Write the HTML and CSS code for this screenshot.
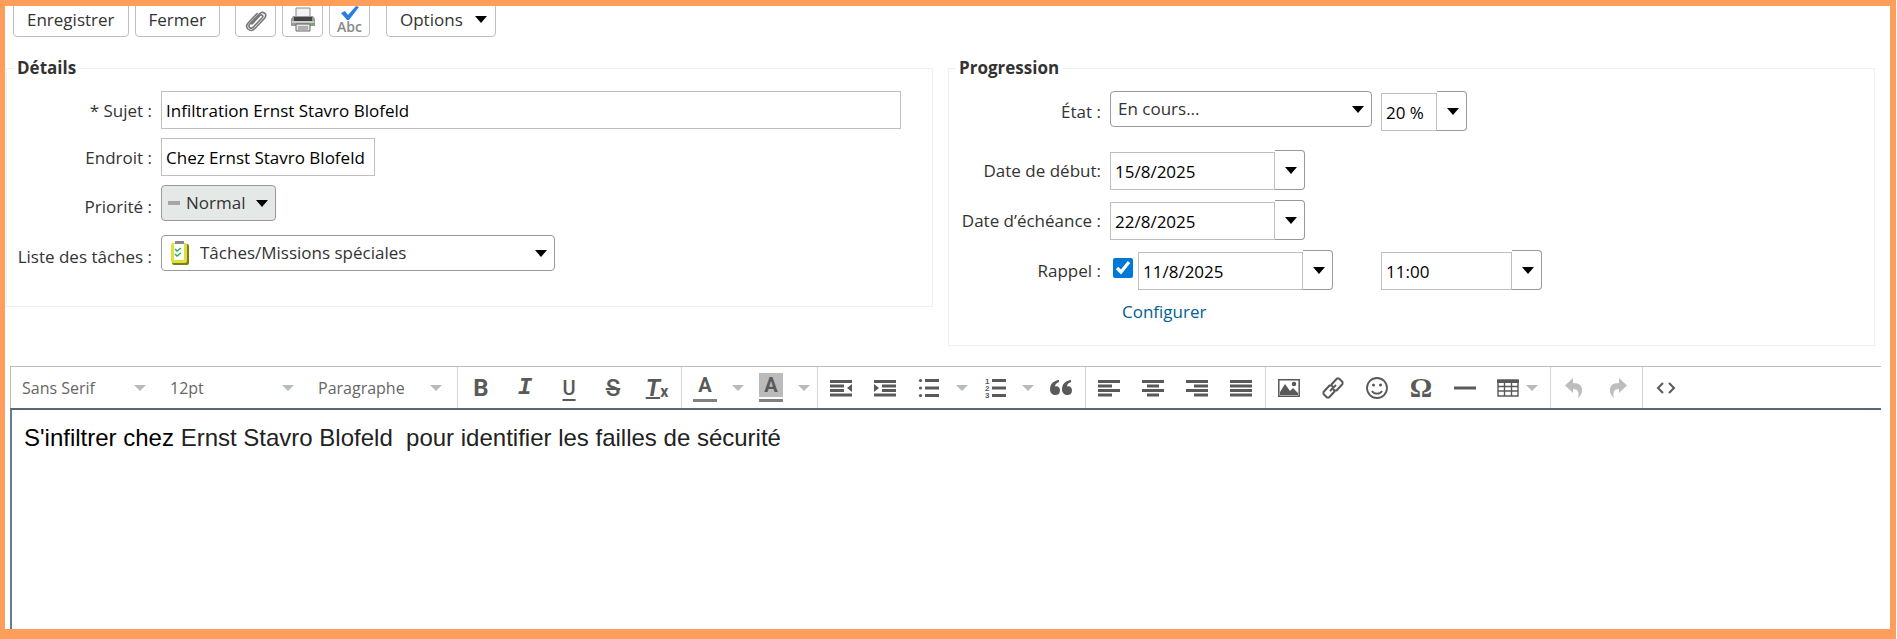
FILE: index.html
```html
<!DOCTYPE html>
<html lang="fr">
<head>
<meta charset="UTF-8">
<title>Infiltration Ernst Stavro Blofeld</title>
<link rel="stylesheet" href="styles.css">
</head>
<body>

    <!-- Main toolbar -->
    <div class="toolbar">
        <button class="button">Enregistrer</button>
        <button class="button">Fermer</button>
        <div class="button-group">
            <button class="button button-icon" aria-label="Joindre">
                <svg width="24" height="24" viewBox="0 0 24 24" fill="none" stroke="#777" stroke-width="1.6" stroke-linecap="round"><path d="M8 16l8-8.500c1.500-1.600 3.800 .3 2.400 2l-9.200 9.700c-2.500 2.400-5.700-.4-3.400-3.100l9.700-10.300c3.600-3.500 8.300 .4 5.100 4.400l-9.900 10.500c-4.600 4.300-10.700-.9-6.600-5.700l9-9.500"/></svg>
            </button>
            <button class="button button-icon" aria-label="Imprimer">
                <svg width="26" height="26" viewBox="0 0 26 26"><path d="M6 1h14v9H6z" fill="#f2f2f2" stroke="#888"/><path d="M3 9h20l2 3v7H1v-7z" fill="#999"/><path d="M4 10h18v4H4z" fill="#444"/><path d="M2 14h22v2H2z" fill="#ccc"/><path d="M6 17h14v7H6z" fill="#e6e6e6" stroke="#666"/><path d="M8 20h10M8 22h10" stroke="#777"/><path d="M23 16v2" stroke="#3c3" stroke-width="2"/></svg>
            </button>
            <button class="button button-icon spell" aria-label="Orthographe">
                <svg width="20" height="14" viewBox="0 0 20 14"><path d="M1 7l4-2 3 4 8-9 3 1-10 13H7z" fill="#2a7de1"/></svg>
                <span>Abc</span>
            </button>
        </div>
        <button class="button button-menu">Options <i class="arrow"></i></button>
    </div>

    <!-- Task form -->
    <form class="panels">
        <fieldset class="panel details">
            <legend>Détails</legend>
            <div class="row">
                <label for="subject">* Sujet :</label>
                <input class="text grow" id="subject" type="text" value="Infiltration Ernst Stavro Blofeld">
            </div>
            <div class="row">
                <label for="location">Endroit :</label>
                <input class="text location" id="location" type="text" value="Chez Ernst Stavro Blofeld">
            </div>
            <div class="row row-select">
                <label for="priority">Priorité :</label>
                <div class="select priority">
                    <select id="priority"><option>Normal</option></select>
                    <i class="arrow"></i>
                </div>
            </div>
            <div class="row row-select">
                <label for="folder">Liste des tâches :</label>
                <div class="select folder">
                    <svg width="20" height="24" viewBox="0 0 20 24"><rect x="2" y="3" width="17" height="21" rx="2" fill="#7d7d1c"/><rect x="1" y="2" width="16" height="20" rx="2" fill="#dfe03a"/><path d="M4 3h10v16H4z" fill="#fff"/><path d="M5 0h9v3H5z" fill="#888"/><path d="M5 8l2 2 4-3M5 13l2 2 4-3" fill="none" stroke="#2fae4b" stroke-width="1.500"/></svg>
                    <select id="folder"><option>Tâches/Missions spéciales</option></select>
                    <i class="arrow"></i>
                </div>
            </div>
        </fieldset>

        <fieldset class="panel progress">
            <legend>Progression</legend>
            <div class="row row-status">
                <label for="status">État :</label>
                <div class="cell">
                    <div class="select status">
                        <select id="status"><option>En cours...</option></select>
                        <i class="arrow"></i>
                    </div>
                </div>
                <div class="combo percent">
                    <input class="text" type="text" value="20 %" aria-label="Pourcentage">
                    <button type="button" aria-label="Choisir le pourcentage"><i class="arrow"></i></button>
                </div>
            </div>
            <div class="row">
                <label for="start">Date de début:</label>
                <div class="combo date">
                    <input class="text" id="start" type="text" value="15/8/2025">
                    <button type="button" aria-label="Choisir la date de début"><i class="arrow"></i></button>
                </div>
            </div>
            <div class="row">
                <label for="due">Date d’échéance :</label>
                <div class="combo date">
                    <input class="text" id="due" type="text" value="22/8/2025">
                    <button type="button" aria-label="Choisir la date d'échéance"><i class="arrow"></i></button>
                </div>
            </div>
            <div class="row">
                <label for="reminder">Rappel :</label>
                <div class="cell">
                    <input class="check" id="reminder" type="checkbox" checked>
                    <div class="combo date">
                        <input class="text" type="text" value="11/8/2025" aria-label="Date du rappel">
                        <button type="button" aria-label="Choisir la date du rappel"><i class="arrow"></i></button>
                    </div>
                </div>
                <div class="combo time">
                    <input class="text" type="text" value="11:00" aria-label="Heure du rappel">
                    <button type="button" aria-label="Choisir l'heure du rappel"><i class="arrow"></i></button>
                </div>
            </div>
            <a class="configure" href="#">Configurer</a>
        </fieldset>
    </form>

    <!-- Editor -->
    <div class="editor">
        <div class="editor-bar">
            <div class="group">
                <button class="listbox">Sans Serif <i class="caret"></i></button>
                <button class="listbox">12pt <i class="caret"></i></button>
                <button class="listbox">Paragraphe <i class="caret"></i></button>
            </div>
            <div class="group">
                <button class="tool bold">B</button>
                <button class="tool italic">I</button>
                <button class="tool underline">U</button>
                <button class="tool strike">S</button>
                <button class="tool clear"><span>T</span><sub>x</sub></button>
            </div>
            <div class="group">
                <div class="split"><button class="tool color"><span>A</span></button><button class="open" aria-label="Couleur du texte"><i class="caret"></i></button></div>
                <div class="split"><button class="tool color back"><span>A</span></button><button class="open" aria-label="Couleur de fond"><i class="caret"></i></button></div>
            </div>
            <div class="group">
                <button class="tool" aria-label="Diminuer le retrait"><svg viewBox="0 0 22 22"><path d="M0 3h22v3H0zM0 7.500h14v3H0zM0 12h14v3H0zM0 16.500h22v3H0zM22 7v8l-5-4z"/></svg></button>
                <button class="tool" aria-label="Augmenter le retrait"><svg viewBox="0 0 22 22"><path d="M0 3h22v3H0zM8 7.500h14v3H8zM8 12h14v3H8zM0 16.500h22v3H0zM0 7v8l5-4z"/></svg></button>
                <div class="split"><button class="tool" aria-label="Liste à puces"><svg viewBox="0 0 22 22"><path d="M7 2h14v3H7zM7 9.500h14v3H7zM7 17h14v3H7z"/><circle cx="2.500" cy="3.500" r="1.600"/><circle cx="2.500" cy="11" r="1.600"/><circle cx="2.500" cy="18.500" r="1.600"/></svg></button><button class="open" aria-label="Types de puces"><i class="caret"></i></button></div>
                <div class="split"><button class="tool" aria-label="Liste numérotée"><svg viewBox="0 0 22 22"><path d="M8 2h14v3H8zM8 9.500h14v3H8zM8 17h14v3H8z"/><text x="1" y="7">1</text><text x="1" y="14">2</text><text x="1" y="21">3</text></svg></button><button class="open" aria-label="Types de numéros"><i class="caret"></i></button></div>
                <button class="tool" aria-label="Citation"><svg viewBox="0 0 22 22"><path id="quote" d="M9 3v2C6 6 5 8 5 9.500c3-1 5 1 5 4 0 3-2 4.500-4.500 4.500C2.500 18 0 16 0 12c0-5 4-8.500 9-9z"/><use href="#quote" x="12"/></svg></button>
            </div>
            <div class="group">
                <button class="tool" aria-label="Aligner à gauche"><svg viewBox="0 0 22 22"><path d="M0 3h22v3H0zM0 7.500h14v3H0zM0 12h22v3H0zM0 16.500h14v3H0z"/></svg></button>
                <button class="tool" aria-label="Centrer"><svg viewBox="0 0 22 22"><path d="M0 3h22v3H0zM5 7.500h12v3H5zM0 12h22v3H0zM5 16.500h12v3H5z"/></svg></button>
                <button class="tool" aria-label="Aligner à droite"><svg viewBox="0 0 22 22"><path d="M0 3h22v3H0zM8 7.500h14v3H8zM0 12h22v3H0zM8 16.500h14v3H8z"/></svg></button>
                <button class="tool" aria-label="Justifier"><svg viewBox="0 0 22 22"><path d="M0 3h22v3H0zM0 7.500h22v3H0zM0 12h22v3H0zM0 16.500h22v3H0z"/></svg></button>
            </div>
            <div class="group">
                <button class="tool" aria-label="Image"><svg viewBox="0 0 22 22"><path d="M.8 2.800h20.400v16.400H.8z" fill="none" stroke="#595959" stroke-width="1.500"/><path d="M2 18V15l5-8 5 7 3-3 5 5v2z"/><circle cx="16" cy="7" r="2.200"/></svg></button>
                <button class="tool" aria-label="Lien"><svg viewBox="0 0 22 22"><g fill="none" stroke="#595959" stroke-width="2" stroke-linejoin="round"><path d="M9 8l6-6.500h2L20.500 5v2l-6 6.500h-2L11 12"/><path d="M13 14l-6 6.500H5L1.500 17v-2l6-6.500h2L11 10"/><path d="M8 14l6-6"/></g></svg></button>
                <button class="tool" aria-label="Émoticône"><svg viewBox="0 0 22 22"><g fill="none" stroke="#595959" stroke-width="1.800"><circle cx="11" cy="11" r="10"/><path d="M6 14c2 3.500 8 3.500 10 0"/></g><circle cx="7.500" cy="8" r="1.500"/><circle cx="14.500" cy="8" r="1.500"/></svg></button>
                <button class="tool omega">Ω</button>
                <button class="tool" aria-label="Ligne horizontale"><svg viewBox="0 0 22 22"><path d="M0 9.500h22v3H0z"/></svg></button>
                <button class="tool table" aria-label="Tableau"><svg viewBox="0 0 22 22"><path d="M1 3h20v16H1zM1 9.500h20M1 14h20M7.500 4v15M14.500 4v15" fill="none" stroke="#595959" stroke-width="1.400"/><path d="M0 3h22v3H0z"/></svg><i class="caret"></i></button>
            </div>
            <div class="group">
                <button class="tool disabled" aria-label="Annuler" disabled><svg viewBox="0 0 22 22"><path d="M2 8.500L10 1v5c7 0 9.500 3 9 8 0 3-2 5-4 7 1-5 1-9-5-9v4z"/></svg></button>
                <button class="tool disabled" aria-label="Rétablir" disabled><svg viewBox="0 0 22 22"><path d="M20 8.500L12 1v5c-7 0-9.500 3-9 8 0 3 2 5 4 7-1-5-1-9 5-9v4z"/></svg></button>
            </div>
            <div class="group">
                <button class="tool" aria-label="Code source"><svg viewBox="0 0 22 22"><path d="M8 6l-5 5 5 5M14 6l5 5-5 5" fill="none" stroke="#595959" stroke-width="2"/></svg></button>
            </div>
        </div>
        <div class="editor-body" contenteditable="true" role="textbox" aria-label="Contenu" spellcheck="false">S'infiltrer chez <span>Ernst Stavro Blofeld &nbsp;pour identifier les failles de sécurité</span></div>
    </div>

</body>
</html>
```
FILE: styles.css
```css
* {
    box-sizing: border-box;
}

body {
    display: flex;
    flex-direction: column;
    min-height: 100vh;
    margin: 0;
    background-color: #fff;
    color: #333;
    font-family: 'Open Sans', 'Noto Sans', sans-serif;
    font-size: 17px;
    line-height: 24px;
}

/* Orange frame over the page edges */
body::after {
    content: "";
    position: fixed;
    inset: 0 1px 0 0;
    border: solid #ff9d5a;
    border-width: 6px 6px 10px 5px;
    pointer-events: none;
}

button, input, select {
    font: inherit;
    color: inherit;
    margin: 0;
}

button {
    padding: 0;
    background: none;
    border: none;
    cursor: pointer;
}

.arrow {
    border: 6px solid transparent;
    border-top: 7px solid #000;
    border-bottom: 0;
}

.caret {
    border: 6px solid transparent;
    border-top-color: #b4bcc2;
    border-bottom: 0;
}

/* Main toolbar */
.toolbar {
    display: flex;
    gap: 6px;
    padding: 2px 13px 0;
}

.button {
    display: flex;
    align-items: center;
    justify-content: center;
    height: 35px;
    padding: 0 13px;
    background-color: #fff;
    border: 1px solid #bfbfbf;
    border-radius: 4px;
}

.button-group {
    display: flex;
    gap: 6px;
    margin: 0 10px 0 9px;
}

.button-icon {
    width: 41px;
    padding: 0;
}

.button-menu {
    gap: 12px;
    padding-right: 8px;
}

.spell {
    flex-direction: column;
    color: #888;
    font-size: 14px;
    font-weight: 600;
    line-height: 13px;
}

/* Form panels */
.panels {
    display: grid;
    grid-template-columns: 1fr 1fr;
    align-items: start;
    gap: 15px;
    margin: 19px 22px 0 6px;
}

.panel {
    min-width: 0;
    margin: 0;
    border: 1px solid #f0f0f0;
}

.details {
    padding: 11px 31px 30px 0;
}

.progress {
    padding: 11px 0 21px;
}

legend {
    margin-left: 7px;
    padding: 0 3px;
    font-weight: 700;
    font-size: 17px;
}

.row {
    display: flex;
    align-items: flex-start;
    margin-bottom: 9px;
}

.row:last-child {
    margin-bottom: 0;
}

.row-select {
    min-height: 41px;
}

.row label {
    flex: none;
    width: 154px;
    padding: 8px 9px 0 0;
    text-align: right;
    white-space: nowrap;
}

.row-select label {
    padding-top: 10px;
}

.progress .row {
    margin-bottom: 10px;
}

.progress .row-status {
    margin-bottom: 19px;
}

.progress .row label {
    width: 161px;
    padding-top: 9px;
}

.text {
    height: 38px;
    padding: 0 4px;
    background-color: #fff;
    border: 1px solid #bfbfbf;
    color: #000;
}

.grow {
    flex: 1;
    min-width: 0;
}

.location {
    width: 214px;
}

.select {
    position: relative;
    height: 36px;
}

.select select {
    width: 100%;
    height: 100%;
    padding: 0 32px 0 7px;
    background-color: #fff;
    border: 1px solid #999;
    border-radius: 4px;
    appearance: none;
}

.select .arrow {
    position: absolute;
    top: 15px;
    right: 8px;
    pointer-events: none;
}

.select svg {
    position: absolute;
    top: 6px;
    left: 9px;
}

.priority {
    width: 115px;
}

.priority select {
    padding: 0 0 0 24px;
    background-color: #e4e9e7;
}

.priority::before {
    content: "";
    position: absolute;
    top: 16px;
    left: 7px;
    width: 12px;
    height: 4px;
    background-color: #a6a6a6;
}

.folder {
    width: 394px;
}

.folder select {
    padding-left: 38px;
}

.status {
    width: 262px;
}

.cell {
    display: flex;
    width: 271px;
}

.combo {
    display: flex;
}

.combo .text {
    margin-top: 2px;
}

.combo button {
    display: flex;
    align-items: center;
    justify-content: center;
    width: 30px;
    height: 40px;
    padding-left: 2px;
    border: 1px solid #999;
    border-left: none;
    border-radius: 0 4px 4px 0;
}

.date .text {
    width: 165px;
}

.percent .text {
    width: 56px;
}

.time .text {
    width: 131px;
}

.check {
    width: 20px;
    height: 20px;
    margin: 8px 5px 0 3px;
    accent-color: #0078d7;
}

.configure {
    margin-left: 173px;
    color: #00608f;
    text-decoration: none;
}

/* Editor */
.editor {
    display: flex;
    flex: 1;
    flex-direction: column;
    margin: 20px 16px 0 10px;
}

.editor-bar {
    display: flex;
    height: 42px;
    border-top: 1px solid #bbb;
    border-left: 1px solid #bbb;
}

.group {
    display: flex;
    padding: 0 2px 0 1px;
    border-left: 1px solid #d4d4d4;
}

.group:first-child {
    padding-right: 1px;
    border-left: none;
}

.listbox {
    display: flex;
    align-items: center;
    justify-content: space-between;
    width: 148px;
    padding: 0 14px 0 10px;
    color: #666;
    font-size: 16px;
}

.tool {
    display: flex;
    align-items: center;
    justify-content: center;
    width: 44px;
    color: #595959;
    font-family: Roboto, sans-serif;
    font-size: 24px;
    line-height: 24px;
}

.tool svg {
    width: 22px;
    height: 22px;
    fill: #595959;
    overflow: visible;
}

.tool text {
    font: 700 8px 'Liberation Sans', sans-serif;
}

.tool.disabled svg {
    fill: #bdbdbd;
}

.bold {
    font-weight: 700;
}

.italic {
    font-family: 'Liberation Mono', monospace;
    font-style: italic;
    font-weight: 700;
}

.underline {
    font-size: 20px;
    font-weight: 500;
    text-decoration: underline;
    text-underline-offset: 4px;
}

.strike {
    font-weight: 500;
    text-decoration: line-through 2px;
}

.clear span {
    font-style: italic;
    font-weight: 700;
    text-decoration: underline 2px;
}

.clear sub {
    align-self: flex-end;
    padding-bottom: 8px;
    font-size: 16px;
    font-weight: 700;
    line-height: 16px;
}

.omega {
    font-family: 'Liberation Serif', serif;
    font-size: 28px;
    font-weight: 700;
}

.split {
    display: flex;
    width: 66px;
}

.split .tool {
    width: 44px;
}

.open {
    display: flex;
    align-items: center;
    justify-content: center;
    width: 22px;
}

.color span {
    width: 24px;
    height: 29px;
    border-bottom: 3px solid #808080;
    font-size: 20px;
    font-weight: 700;
}

.back span {
    background: linear-gradient(#bbb 24px, #fff 24px);
}

.table {
    gap: 7px;
    width: 61px;
}

.editor-body {
    flex: 1;
    padding: 14px 12px;
    border-top: 2px solid #54697a;
    border-left: 2px solid #667d8f;
    color: #000;
    font-family: 'Liberation Sans', Arial, sans-serif;
    font-size: 24px;
    line-height: 28px;
    outline: none;
}

.editor-body span {
    color: #222;
}
```
